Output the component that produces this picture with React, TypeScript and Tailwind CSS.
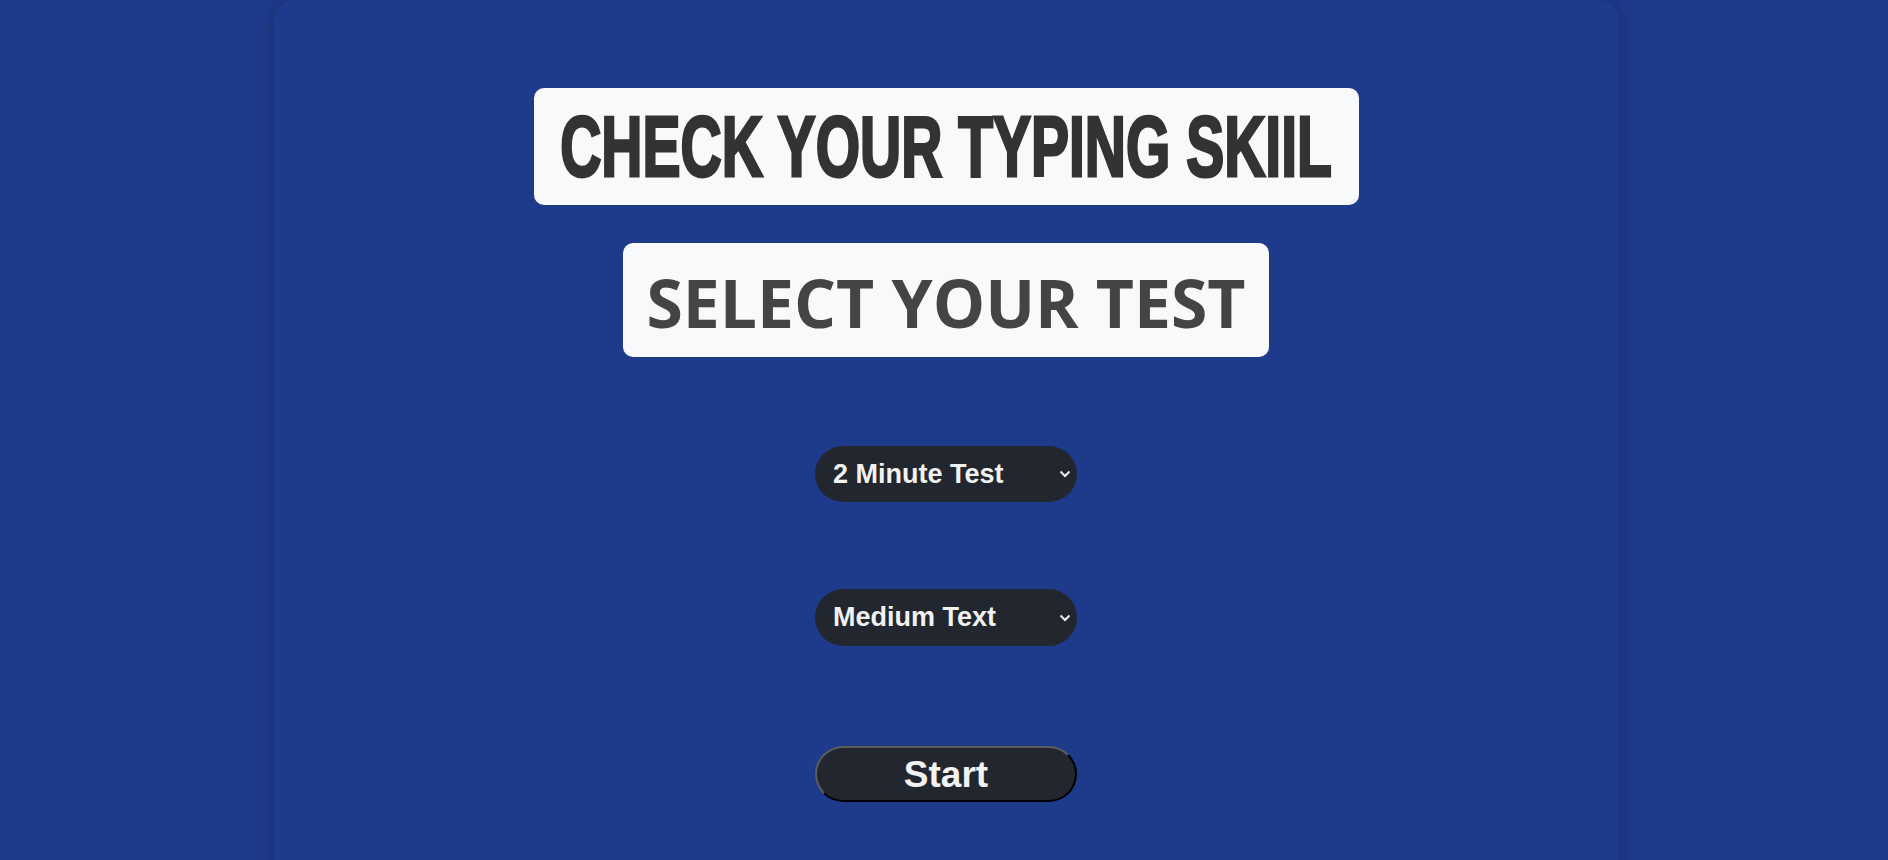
export default function App() {
  return (
    <div className="min-h-screen bg-[#1e3a8a] pl-[4px] font-['Liberation_Sans',Arial,sans-serif]">
      <div className="mx-auto flex w-[1345px] flex-col items-center rounded-[20px] bg-[#1e3a8a] pt-[88px] pb-[100px] shadow-[0_0_18px_rgba(0,0,0,0.22)]">
        {/* Main title */}
        <div className="flex h-[117px] w-[825px] items-center justify-center rounded-[10px] bg-[#f8f9fa]">
          <span className="inline-block scale-y-[1.5] text-[57px] leading-none font-bold tracking-normal text-[#333333] [-webkit-text-stroke:2px_#333333]">
            CHECK YOUR TYPING SKIIL
          </span>
        </div>

        {/* Sub title */}
        <div className="mt-[38px] flex h-[114px] w-[646px] items-center justify-center rounded-[10px] bg-[#f8f9fa] pt-[4px]">
          <span className="font-['Open_Sans','Noto_Sans',sans-serif] text-[66px] leading-none font-bold text-[#444444]">
            SELECT YOUR TEST
          </span>
        </div>

        {/* Test duration */}
        <div className="relative mt-[89px] w-[262px]">
          <select
            defaultValue="2"
            className="h-[56px] w-full appearance-none rounded-full bg-[#22272f] pl-[18px] text-[27px] font-bold text-[#f2f2f2] outline-none"
          >
            <option value="1">1 Minute Test</option>
            <option value="2">2 Minute Test</option>
            <option value="5">5 Minute Test</option>
          </select>
          <Chevron />
        </div>

        {/* Text difficulty */}
        <div className="relative mt-[87px] w-[262px]">
          <select
            defaultValue="medium"
            className="h-[57px] w-full appearance-none rounded-full bg-[#22272f] pl-[18px] text-[27px] font-bold text-[#f2f2f2] outline-none"
          >
            <option value="easy">Easy Text</option>
            <option value="medium">Medium Text</option>
            <option value="hard">Hard Text</option>
          </select>
          <Chevron />
        </div>

        <button className="mt-[100px] h-[56px] w-[262px] rounded-full border-2 border-t-[#5c5c5c] border-r-black border-b-black border-l-[#5c5c5c] bg-[#22272f] text-[37px] leading-none font-bold text-[#f2f2f2]">
          Start
        </button>
      </div>
    </div>
  );
}

function Chevron() {
  return (
    <svg
      className="pointer-events-none absolute top-1/2 right-[6px] h-[8px] w-[12px] -translate-y-1/2"
      viewBox="0 0 12 8"
      fill="none"
      stroke="#f2f2f2"
      strokeWidth="2"
    >
      <path d="M1.5 1.5 6 6l4.5-4.5" />
    </svg>
  );
}
